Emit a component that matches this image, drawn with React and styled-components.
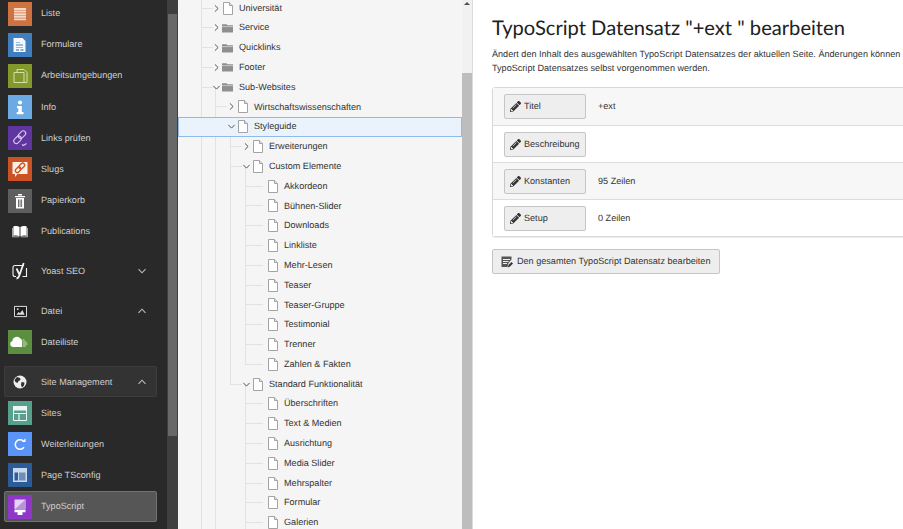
import React from "react";
import styled, { createGlobalStyle } from "styled-components";
import { FaPencilAlt } from "react-icons/fa";

const Global = createGlobalStyle`
  html, body { margin: 0; height: 100%; overflow: hidden; background: #fff; }
  #root { height: 100%; }
  * { box-sizing: border-box; }
`;

const Page = styled.div`
  display: flex;
  height: 529px;
  width: 903px;
  overflow: hidden;
  font: 9.1px/1.2 "Liberation Sans", Arial, sans-serif;
  text-rendering: geometricPrecision;
`;

const Sidebar = styled.nav`
  width: 178px;
  flex: none;
  display: flex;
  background: #292929;
  overflow: hidden;
`;
const MenuList = styled.div`
  width: 167px;
  flex: none;
  margin-top: -2.1px;
  padding-left: 4px;
`;
const MenuRow = styled.div`
  display: flex;
  align-items: center;
  width: 153px;
  height: ${(p) => (p.$boxed ? "31px" : "31.2px")};
  margin-top: ${(p) => p.$gap || 0}px;
  padding: 0 9px 0 3px;
  gap: 9px;
  color: #cfcfcf;
  border-radius: 2px;
  border: 1px solid ${(p) => (p.$active ? "#727272" : p.$boxed ? "#3d3d3d" : "transparent")};
  background: ${(p) => (p.$active ? "#565656" : p.$boxed ? "#333" : "transparent")};
`;
const IconBox = styled.span`
  width: 24px;
  height: 24px;
  flex: none;
  display: flex;
  align-items: center;
  justify-content: center;
  background: ${(p) => p.$bg || "transparent"};
`;
const MenuLabel = styled.span`
  flex: 1;
  white-space: nowrap;
`;
const SideTrack = styled.div`
  width: 11px;
  flex: none;
  background: #3f3f3f;
  padding: 14px 1px 93px;
`;
const SideThumb = styled.div`
  height: 100%;
  background: #686868;
`;

const Tree = styled.section`
  width: 284px;
  flex: none;
  background: #f5f5f5;
  overflow: hidden;
`;
const TreeList = styled.div`
  margin-top: -1.9px;
`;
const TreeRow = styled.div`
  display: flex;
  align-items: center;
  height: 19.8px;
  padding-left: ${(p) => 33 + p.$level * 15}px;
  color: #333;
  white-space: nowrap;
  background: ${(p) => (p.$selected ? "#eaf3fb" : "none")};
  box-shadow: ${(p) => (p.$selected ? "inset 0 0 0 1px #8fbbe6" : "none")};
`;
const Expander = styled.span`
  width: 12px;
  flex: none;
  padding-left: 1px;
  display: flex;
  justify-content: flex-start;
`;
const NodeIcon = styled.span`
  width: 10px;
  height: 13px;
  flex: none;
  margin-right: 6px;
  display: flex;
  align-items: center;
`;
const TreeTrack = styled.div`
  width: 10px;
  flex: none;
  background: #f1f1f1;
  padding-top: 2px;
  display: flex;
  flex-direction: column;
  align-items: center;
`;
const TrackArrow = styled.div`
  width: 0;
  height: 0;
  border: 3px solid transparent;
  border-top: 0;
  border-bottom: 3px solid #505050;
`;
const TreeThumb = styled.div`
  width: 100%;
  flex: 1;
  margin-top: 68px;
  background: #bdbdbd;
`;
const Divider = styled.div`
  width: 1px;
  flex: none;
  background: #dcdcdc;
`;

const Content = styled.main`
  flex: 1;
  min-width: 0;
  background: #fff;
  padding: 15px 0 0 19px;
  overflow: hidden;
  color: #333;
`;
const Title = styled.h1`
  margin: 0;
  font: 400 20.15px/26px Lato, "Noto Sans", sans-serif;
  color: #212121;
  white-space: nowrap;
`;
const Intro = styled.p`
  margin: 7px 0 0;
  line-height: 13.5px;
  white-space: nowrap;
`;
const Table = styled.div`
  width: 480px;
  margin-top: 12px;
  border: 1px solid #d8d8d8;
  border-radius: 3px;
  box-shadow: 0 1px 1px rgba(0, 0, 0, 0.08);
`;
const TableRow = styled.div`
  display: flex;
  align-items: center;
  gap: 12px;
  height: 37.1px;
  padding-left: 11px;
  background: ${(p) => (p.$shade ? "#f7f7f7" : "#fff")};
  & + & {
    border-top: 1px solid #dcdcdc;
  }
`;
const Button = styled.div`
  display: flex;
  align-items: center;
  height: 25px;
  width: ${(p) => p.$width || "auto"};
  padding: 0 ${(p) => p.$pad || 5}px;
  gap: ${(p) => p.$iconGap || 3}px;
  background: #eeeeee;
  border: 1px solid #c5c5c5;
  border-radius: 2px;
  color: #333;
  white-space: nowrap;
  svg {
    flex: none;
  }
`;
const EditAll = styled(Button)`
  display: inline-flex;
  margin-top: 12px;
`;

/* ---- icons ---- */
const Chevron = ({ down, size = 9, color = "#555", up }) => (
  <svg width={size} height={size} viewBox="0 0 10 10" fill="none" stroke={color} strokeWidth="1.1">
    <path d={down ? "M1.5 3.2 5 6.8 8.5 3.2" : up ? "M1.5 6.8 5 3.2 8.5 6.8" : "M3.2 1.5 6.8 5 3.2 8.5"} />
  </svg>
);
const PageIcon = () => (
  <svg width="10" height="13" viewBox="0 0 10 13">
    <path d="M.5.5h6l3 3v9h-9z" fill="#fff" stroke="#a3a3a3" />
    <path d="M6.5.5v3h3" fill="#e2e2e2" stroke="#a3a3a3" />
  </svg>
);
const FolderIcon = () => (
  <svg width="12" height="10" viewBox="0 0 12 10" style={{ marginLeft: -1 }}>
    <path d="M0 1h5l1 1h6v8H0z" fill="#8f8f8f" />
    <path d="M0 3.2h12v.8H0z" fill="#d9d9d9" />
  </svg>
);

const IListe = () => (
  <svg width="24" height="24" viewBox="0 0 24 24" fill="#f3d9c8">
    <path d="M6 6h12v2H6zM6 8.6h12v2H6zM6 11.2h12v2H6zM6 13.8h12v2H6zM6 16.4h12v1.8H6z" />
  </svg>
);
const IForm = () => (
  <svg width="24" height="24" viewBox="0 0 24 24">
    <path d="M5.5 5h9l3 3v11h-12z" fill="#f4f7fb" />
    <path d="M8 9h4v1H8zM8 11h7v2H8zM8 14h7v1H8z" fill="#9dbbdb" />
    <path d="M8 16.5h3v1H8zM12.5 16.5h3v1h-3z" fill="#2a66a8" />
  </svg>
);
const IWork = () => (
  <svg width="24" height="24" viewBox="0 0 24 24" fill="none" stroke="#d5dfa8" strokeWidth="1">
    <path d="M6 8.5h10v10H6z" />
    <path d="M9 8.5V5.5h7l3 3v10h-3" />
  </svg>
);
const IInfo = () => (
  <svg width="24" height="24" viewBox="0 0 24 24" fill="#fff">
    <circle cx="12" cy="7.5" r="2.1" />
    <path d="M9 11h4.8v6H15.5v2.2H8.7V17h1.6v-3.8H9z" />
  </svg>
);
const ILink = () => (
  <svg width="24" height="24" viewBox="0 0 24 24" fill="none" stroke="#d9c8f0" strokeWidth="1.1">
    <rect x="11.5" y="4.4" width="5" height="8.5" rx="2.5" transform="rotate(45 14 8.6)" />
    <rect x="7" y="9.5" width="5" height="8.5" rx="2.5" transform="rotate(45 9.5 13.8)" />
    <path d="M14 18.5l1.5 1 3-2" />
  </svg>
);
const ISlug = () => (
  <svg width="24" height="24" viewBox="0 0 24 24">
    <path d="M4.5 5h15v12H9.5l-2.5 3v-3H4.500z" fill="#fbeee7" />
    <g fill="none" stroke="#cc5423" strokeWidth="1.3">
      <rect x="11.8" y="5.8" width="4" height="6.500" rx="2" transform="rotate(45 13.800 9)" />
      <rect x="8.2" y="9.500" width="4" height="6.500" rx="2" transform="rotate(45 10.200 12.700)" />
    </g>
  </svg>
);
const ITrash = () => (
  <svg width="24" height="24" viewBox="0 0 24 24" fill="#fff">
    <path d="M7 7h10v1.300H7zM10 5h4v1.500h-4z" />
    <path d="M8 9h8v10.500H8z" />
    <path d="M10 10.500h.9v7.500H10zM11.600 10.500h.9v7.500h-.9zM13.200 10.500h.9v7.500h-.9z" fill="#5e5e5e" />
  </svg>
);
const IBook = () => (
  <svg width="16" height="13" viewBox="0 0 18 14" fill="#fff">
    <path d="M1.500 1.500C4 .6 6.500.8 8.500 2v10.500C6.500 11.500 4 11.300 1.500 12z" />
    <path d="M9.500 2c2-1.200 4.500-1.400 7-.5V12c-2.500-.7-5-.5-7 .5z" />
    <path d="M.5 3v10h7.500M17.500 3v10H10" fill="none" stroke="#fff" strokeWidth=".7" />
  </svg>
);
const IYoast = () => (
  <svg width="18" height="18" viewBox="0 0 18 18" fill="none" stroke="#f2f2f2">
    <path d="M13 3.500H4Q2 3.500 2 5.500v7q0 2 2 2h1" strokeWidth="1.100" />
    <path d="M15.500 6v8.500h-4" strokeWidth="1.100" />
    <path d="M5.500 6.500l3.200 6.500M12.700 1L8.500 13q-.8 3-3 3.500" strokeWidth="1.800" />
  </svg>
);
const IImage = () => (
  <svg width="13" height="13" viewBox="0 0 14 14">
    <path d="M.5 1.500h13v11H.5z" fill="#1d1d1d" stroke="#eee" />
    <path d="M2.500 10.500l2.500-3 1.500 1.500 2.500-3.500 2.500 5z" fill="#ddd" />
    <circle cx="4" cy="4.500" r="1" fill="#ddd" />
  </svg>
);
const ICloud = () => (
  <svg width="24" height="24" viewBox="0 0 24 24">
    <path d="M5 17a3 3 0 0 1-.6-5.900A4.500 4.500 0 0 1 12.500 8.500 3 3 0 0 1 14 12v5z" fill="#fff" />
    <path d="M14.500 9.500h2v1h-2zM14.500 11.500h4v1h-4zM14.500 13.500h5v1h-5zM14.500 15.500h3.500v1h-3.500z" fill="#cfe0c0" />
  </svg>
);
const IGlobe = () => (
  <svg width="14" height="14" viewBox="0 0 14 14">
    <circle cx="7" cy="7" r="6.500" fill="#eee" />
    <path d="M4 2l3 1 .5 2-2 1-1 2-2-1-1-2zM8.500 7l3 .5-.5 3-2 2-1-2.500z" fill="#2f2f2f" />
  </svg>
);
const ISites = () => (
  <svg width="24" height="24" viewBox="0 0 24 24" fill="none" stroke="#eef6f3">
    <path d="M5.500 5.500h13v14h-13z" />
    <path d="M5 5h14v4.500H5z" fill="#eef6f3" stroke="none" />
    <path d="M5.500 12.500h13M11 12.500v7" strokeWidth="1.200" />
  </svg>
);
const IRedirect = () => (
  <svg width="24" height="24" viewBox="0 0 24 24" fill="none">
    <path d="M16 15.200A4.800 4.800 0 1 1 15.200 8.800" stroke="#fff" strokeWidth="1.500" />
    <path d="M13.800 10h3.700V6.300z" fill="#fff" />
  </svg>
);
const IPageTs = () => (
  <svg width="24" height="24" viewBox="0 0 24 24">
    <path d="M5 5h14v14H5z" fill="#c9d8ea" />
    <path d="M6.500 9.500h3.500v8H6.500z" fill="#2f5f9b" />
    <path d="M11 9.500h6.500v8H11z" fill="#6c90ba" />
  </svg>
);
const ITypo = () => (
  <svg width="24" height="24" viewBox="0 0 24 24">
    <path d="M6.500 4.500h11v10h-11z" fill="#e6d4f5" />
    <path d="M6.500 14.500l11-10v10z" fill="#b794dc" />
    <path d="M6.500 15h11v2.200h-3v2.800h-5v-2.800h-3z" fill="#fff" />
  </svg>
);
const IDome = () => (
  <svg width="14" height="14" viewBox="0 0 14 14">
    <circle cx="7" cy="7" r="6.500" fill="#eee" />
  </svg>
);
const IEditDoc = () => (
  <svg width="12" height="12" viewBox="0 0 12 12">
    <path d="M.5.500h10v3l-3 3.500-1 4h-6z" fill="#555" />
    <path d="M2 3h7v1H2zM2 5h5.500v1H2zM2 7h4v1H2z" fill="#eee" />
    <path d="M6.800 11.500l.7-2.500 3-3 1.500 1.500-3 3z" fill="#333" />
  </svg>
);

/* ---- data ---- */
const menu = [
  { label: "Liste", bg: "#cd7342", icon: <IListe /> },
  { label: "Formulare", bg: "#3f7fbf", icon: <IForm /> },
  { label: "Arbeitsumgebungen", bg: "#83992c", icon: <IWork /> },
  { label: "Info", bg: "#6caae4", icon: <IInfo /> },
  { label: "Links prüfen", bg: "#5f359f", icon: <ILink /> },
  { label: "Slugs", bg: "#cb5223", icon: <ISlug /> },
  { label: "Papierkorb", bg: "#5e5e5e", icon: <ITrash /> },
  { label: "Publications", icon: <IBook /> },
  { label: "Yoast SEO", icon: <IYoast />, chevron: "down", gap: 8 },
  { label: "Datei", icon: <IImage />, chevron: "up", gap: 9 },
  { label: "Dateiliste", bg: "#5b8f3f", icon: <ICloud /> },
  { label: "Site Management", icon: <IGlobe />, chevron: "up", gap: 8.5, boxed: true },
  { label: "Sites", bg: "#58a08e", icon: <ISites /> },
  { label: "Weiterleitungen", bg: "#5a94f6", icon: <IRedirect /> },
  { label: "Page TSconfig", bg: "#2b5b98", icon: <IPageTs /> },
  { label: "TypoScript", bg: "#8e37c9", icon: <ITypo />, boxed: true, active: true },
  { label: "", icon: <IDome />, gap: 0 },
];

const LINE = "#e2e2e2";
const X = [23, 37, 52, 67];
// each guide: [level, kind] where kind is f(ull), b(ottom half) or t(op half)
const treeRows = [
  ["Universität", 0, "page", "r", []],
  ["Service", 0, "folder", "r", []],
  ["Quicklinks", 0, "folder", "r", []],
  ["Footer", 0, "folder", "r", []],
  ["Sub-Websites", 0, "folder", "d", [[1, "b"]]],
  ["Wirtschaftswissenschaften", 1, "page", "r", [[1, "f"]]],
  ["Styleguide", 1, "page", "d", [[1, "f"], [2, "b"]], true],
  ["Erweiterungen", 2, "page", "r", [[1, "f"], [2, "f"]]],
  ["Custom Elemente", 2, "page", "d", [[1, "f"], [2, "f"], [3, "b"]]],
  ...["Akkordeon", "Bühnen-Slider", "Downloads", "Linkliste", "Mehr-Lesen", "Teaser", "Teaser-Gruppe", "Testimonial", "Trenner"].map(
    (l) => [l, 3, "page", null, [[1, "f"], [2, "f"], [3, "f"]]]
  ),
  ["Zahlen & Fakten", 3, "page", null, [[1, "f"], [2, "f"], [3, "t"]]],
  ["Standard Funktionalität", 2, "page", "d", [[1, "f"], [2, "t"], [3, "b"]]],
  ...["Überschriften", "Text & Medien", "Ausrichtung", "Media Slider", "Mehrspalter", "Formular", "Galerien"].map(
    (l) => [l, 3, "page", null, [[1, "f"], [3, "f"]]]
  ),
];

const guideBackground = (level, guides) => {
  const grad = `linear-gradient(${LINE},${LINE})`;
  const parts = [`${grad} ${X[0]}px 0 / 1px 100% no-repeat`];
  guides.forEach(([l, kind]) => {
    if (kind === "f") parts.push(`${grad} ${X[l]}px 0 / 1px 100% no-repeat`);
    if (kind === "b") parts.push(`${grad} ${X[l]}px 100% / 1px 50% no-repeat`);
    if (kind === "t") parts.push(`${grad} ${X[l]}px 0 / 1px 50% no-repeat`);
  });
  const w = level === 3 ? 18 : 12;
  parts.push(`${grad} ${X[level]}px 50% / ${w}px 1px no-repeat`);
  return parts.join(",");
};

const records = [
  { label: "Titel", value: "+ext", shade: true },
  { label: "Beschreibung", value: "" },
  { label: "Konstanten", value: "95 Zeilen", shade: true },
  { label: "Setup", value: "0 Zeilen" },
];

export default function App() {
  return (
    <Page>
      <Global />
      <Sidebar>
        <MenuList>
          {menu.map((m, i) => (
            <MenuRow key={i} $gap={m.gap} $boxed={m.boxed} $active={m.active}>
              <IconBox $bg={m.bg}>{m.icon}</IconBox>
              <MenuLabel>{m.label}</MenuLabel>
              {m.chevron && <Chevron down={m.chevron === "down"} up={m.chevron === "up"} color="#bdbdbd" size={10} />}
            </MenuRow>
          ))}
        </MenuList>
        <SideTrack>
          <SideThumb />
        </SideTrack>
      </Sidebar>
      <Tree>
        <TreeList>
          {treeRows.map(([label, level, type, exp, guides, selected]) => (
            <TreeRow
              key={label}
              $level={level}
              $selected={selected}
              style={selected ? undefined : { background: guideBackground(level, guides) }}
            >
              <Expander>{exp && <Chevron down={exp === "d"} size={9} color="#555" />}</Expander>
              <NodeIcon>{type === "page" ? <PageIcon /> : <FolderIcon />}</NodeIcon>
              {label}
            </TreeRow>
          ))}
        </TreeList>
      </Tree>
      <TreeTrack>
        <TrackArrow />
        <TreeThumb />
      </TreeTrack>
      <Divider />
      <Content>
        <Title>TypoScript Datensatz "+ext " bearbeiten</Title>
        <Intro>
          Ändert den Inhalt des ausgewählten TypoScript Datensatzes der aktuellen Seite. Änderungen können
          <br />
          TypoScript Datensatzes selbst vorgenommen werden.
        </Intro>
        <Table>
          {records.map((r) => (
            <TableRow key={r.label} $shade={r.shade}>
              <Button $width="82px">
                <FaPencilAlt size={11} color="#333" />
                {r.label}
              </Button>
              {r.value}
            </TableRow>
          ))}
        </Table>
        <EditAll $pad={8} $iconGap={4} $width="228px">
          <IEditDoc />
          Den gesamten TypoScript Datensatz bearbeiten
        </EditAll>
      </Content>
    </Page>
  );
}
